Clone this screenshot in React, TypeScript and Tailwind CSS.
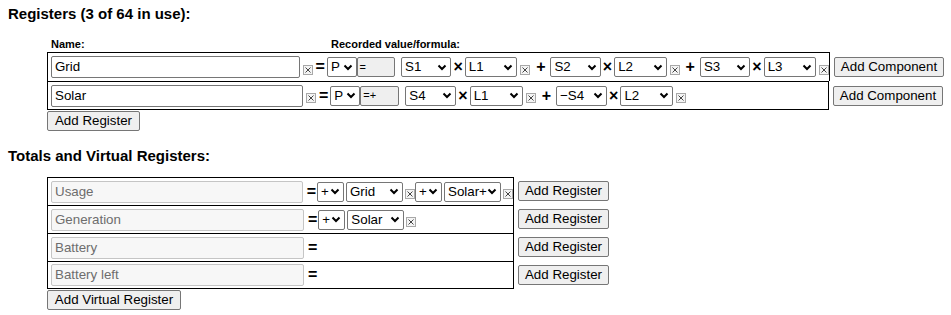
const font = "font-['Liberation_Sans',Arial,sans-serif]";

function Chevron() {
  return (
    <svg width="10" height="7" viewBox="0 0 10 7" className="shrink-0">
      <path d="M1.5 1.5 L5 5 L8.5 1.5" fill="none" stroke="#000" strokeWidth="2" />
    </svg>
  );
}

function Select({ label, w }: { label: string; w: string }) {
  return (
    <div className={`flex h-[20px] items-center justify-between rounded-[2px] border border-[#767676] bg-white pl-[3px] pr-[3px] text-[13.33px] ${w}`}>
      <span className="whitespace-nowrap leading-none">{label}</span>
      <Chevron />
    </div>
  );
}

function XBox() {
  return (
    <svg width="10" height="10" viewBox="0 0 10 10" className="mt-[5px] shrink-0">
      <rect x="0.5" y="0.5" width="9" height="9" fill="#f4f4f4" stroke="#a8a8a8" />
      <path d="M2.5 2.5 L7.5 7.5 M7.5 2.5 L2.5 7.5" stroke="#444" strokeWidth="1" />
    </svg>
  );
}

function Op({ c, cls = "" }: { c: string; cls?: string }) {
  return <span className={`text-[16px] font-bold leading-none ${cls}`}>{c}</span>;
}

function TextBox({ value, w, disabled }: { value: string; w: string; disabled?: boolean }) {
  return (
    <div
      className={`flex h-[22px] items-center rounded-[2px] border px-[3px] text-[13.33px] ${w} ${
        disabled ? "border-[#c5c5c5] bg-[#f7f7f7] text-[#6d6d6d]" : "border-[#767676] bg-white text-black"
      }`}
    >
      {value}
    </div>
  );
}

function Button({ label, w }: { label: string; w: string }) {
  return (
    <div className={`flex h-[20px] items-center justify-center rounded-[2px] border border-[#767676] bg-[#efefef] text-[13.33px] ${w}`}>
      {label}
    </div>
  );
}

function Term({ sign, a, b }: { sign?: string; a: string; b: string }) {
  return (
    <>
      {sign && <Op c={sign} cls="ml-[6px] mr-[5px]" />}
      <Select label={a} w="w-[51px]" />
      <Op c="×" cls="mx-[2px] text-[15px]" />
      <Select label={b} w="w-[53px]" />
      <span className="ml-[3px]">
        <XBox />
      </span>
    </>
  );
}

function RegisterRow({ name, formula, terms, last }: { name: string; formula: string; terms: { sign?: string; a: string; b: string }[]; last?: boolean }) {
  return (
    <div className="flex items-center">
      <div className={`flex h-[29px] w-[783px] items-center border-x border-t border-black pl-[3px] ${last ? "border-b" : ""}`}>
        <TextBox value={name} w="w-[252px]" />
        <span className="ml-[3px]">
          <XBox />
        </span>
        <Op c="=" cls="ml-[3px] mr-[2px]" />
        <Select label="P" w="w-[30px]" />
        <div className="flex h-[20px] w-[39px] items-end rounded-[2px] border border-[#767676] bg-[#efefef] px-[2px] pb-[1px] text-[11px]">
          {formula}
        </div>
        <span className="w-[6px]" />
        {terms.map((t, i) => (
          <Term key={i} {...t} />
        ))}
      </div>
      <div className="ml-[4px]">
        <Button label="Add Component" w="w-[110px]" />
      </div>
    </div>
  );
}

function VirtualRow({ name, parts, last }: { name: string; parts: { s: string; r: string; w: string }[]; last?: boolean }) {
  return (
    <div className="flex items-center">
      <div className={`flex h-[28px] w-[467px] items-center border-x border-t border-black pl-[3px] ${last ? "border-b" : ""}`}>
        <TextBox value={name} w="w-[253px]" disabled />
        <Op c="=" cls="ml-[4px] mr-[1px]" />
        {parts.map((p, i) => (
          <div key={i} className="flex items-center">
            <Select label={p.s} w="w-[27px]" />
            <span className="w-[2px]" />
            <Select label={p.r} w={p.w} />
            <span className="ml-[2px]">
              <XBox />
            </span>
          </div>
        ))}
      </div>
      <div className="ml-[4px]">
        <Button label="Add Register" w="w-[91px]" />
      </div>
    </div>
  );
}

export default function App() {
  return (
    <div className={`${font} min-h-[315px] bg-white px-2 pt-[5px] text-black`}>
      <h3 className="text-[15px] font-bold leading-[18px]">Registers (3 of 64 in use):</h3>
      <div className="ml-[39px] mt-[15px]">
        <div className="flex h-[13px] items-center text-[11px] font-bold">
          <span className="ml-[4px] w-[280px]">Name:</span>
          <span>Recorded value/formula:</span>
        </div>
        <div className="mt-[1px]">
          <RegisterRow
            name="Grid"
            formula="="
            terms={[
              { a: "S1", b: "L1" },
              { sign: "+", a: "S2", b: "L2" },
              { sign: "+", a: "S3", b: "L3" },
            ]}
          />
          <RegisterRow
            name="Solar"
            formula="=+"
            last
            terms={[
              { a: "S4", b: "L1" },
              { sign: "+", a: "−S4", b: "L2" },
            ]}
          />
        </div>
        <div className="mt-[1px]">
          <Button label="Add Register" w="w-[93px]" />
        </div>
      </div>
      <h3 className="mt-[16px] text-[15px] font-bold leading-[18px]">Totals and Virtual Registers:</h3>
      <div className="ml-[39px] mt-[12px]">
        <VirtualRow
          name="Usage"
          parts={[
            { s: "+", r: "Grid", w: "w-[57px]" },
            { s: "+", r: "Solar+", w: "w-[57px]" },
          ]}
        />
        <VirtualRow name="Generation" parts={[{ s: "+", r: "Solar", w: "w-[57px]" }]} />
        <VirtualRow name="Battery" parts={[]} />
        <VirtualRow name="Battery left" parts={[]} last />
        <div className="mt-[1px]">
          <Button label="Add Virtual Register" w="w-[134px]" />
        </div>
      </div>
    </div>
  );
}
